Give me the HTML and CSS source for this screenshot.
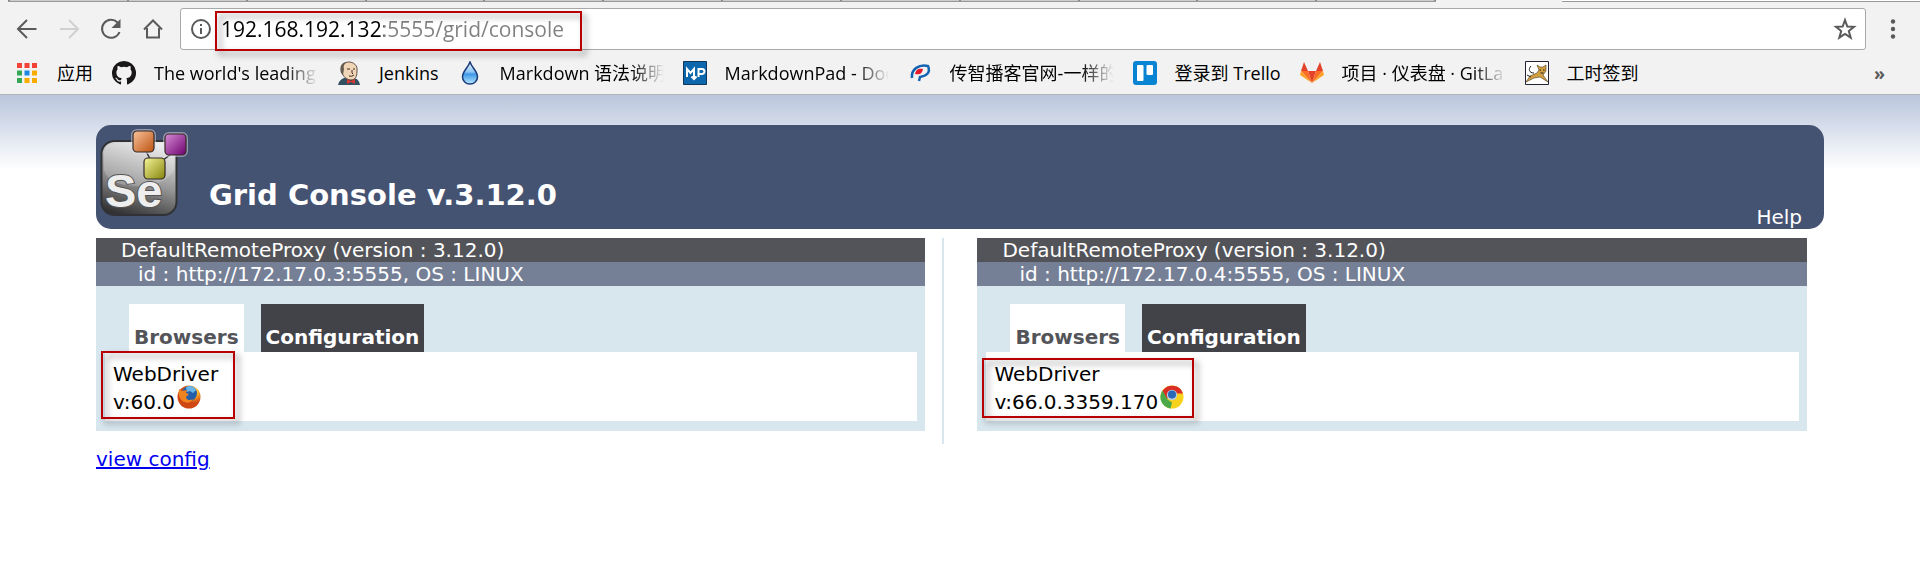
FILE: index.html
```html
<!DOCTYPE html>
<html lang="en">
<head>
<meta charset="utf-8">
<title>Grid Console</title>
<link rel="stylesheet" href="styles.css">
</head>
<body>
<div class="browser">
  <div class="tabstrip"><span class="strip strip-tabs"><i></i><i></i><i></i><i></i><i></i><i></i><i></i><i></i><i></i><i></i><i></i><i></i><i></i></span><span class="strip strip-end"></span></div>
  <div class="toolbar">
    <button class="nav" aria-label="Back"><svg viewBox="0 0 24 24"><path d="M12 3L3 12l9 9M3 12h18.500"/></svg></button>
    <button class="nav nav-off" aria-label="Forward"><svg viewBox="0 0 24 24"><path d="M12 3l9 9-9 9M21 12H3"/></svg></button>
    <button class="nav" aria-label="Reload"><svg viewBox="0 0 24 24"><path d="M20.500 15A9 9 0 1 1 18.500 5.500"/><path class="solid" d="M21.500 2v9h-9z"/></svg></button>
    <button class="nav" aria-label="Home"><svg viewBox="0 0 24 24"><path d="M3 12.500L12 3.500l9 9M6 11v9.500h12V11"/></svg></button>
    <div class="omnibox">
      <svg class="info" viewBox="0 0 24 24"><circle cx="12" cy="12" r="9"/><path d="M12 11v6M12 7v2"/></svg>
      <div class="address">
        <input class="url" type="text" aria-label="Address" value="192.168.192.132:5555/grid/console">
        <span class="mark mark-url"></span>
      </div>
      <button class="star" aria-label="Bookmark this page"><svg viewBox="0 0 24 24"><path d="M12 3l2.300 6.500 6.700.3-5.200 4.200 1.900 6.700L12 17l-5.700 3.700L8.200 14 3 9.800l6.700-.3z"/></svg></button>
    </div>
    <button class="menu" aria-label="Menu"><svg viewBox="0 0 8 24"><circle cx="4" cy="4.500" r="2.200"/><circle cx="4" cy="12" r="2.200"/><circle cx="4" cy="19.500" r="2.200"/></svg></button>
  </div>
  <nav class="bookmarks">
    <a href="#"><svg viewBox="0 0 24 24"><path fill="#f44336" d="M2 2h5v5H2zM9.500 2h5v5h-5zM17 2h5v5h-5z"/><path fill="#34a853" d="M2 9.500h5v5H2zM2 17h5v5H2z"/><path fill="#1e88e5" d="M9.500 9.500h5v5h-5z"/><path fill="#f9ab00" d="M17 9.500h5v5h-5zM9.500 17h5v5h-5zM17 17h5v5h-5z"/></svg><span>应用</span></a>
    <a href="#"><svg viewBox="0 0 16 16"><path fill="#191717" d="M8 0a8 8 0 0 0-2.530 15.590c.4.070.550-.170.550-.380v-1.490c-2.230.480-2.700-.950-2.700-.950-.360-.930-.890-1.170-.890-1.170-.730-.500.050-.490.050-.490.810.060 1.230.830 1.230.830.720 1.230 1.880.870 2.340.670.070-.520.280-.880.510-1.080-1.780-.2-3.640-.890-3.640-3.950 0-.870.310-1.590.820-2.150-.080-.2-.360-1.020.080-2.120 0 0 .670-.210 2.200.820a7.600 7.600 0 0 1 4 0c1.530-1.040 2.200-.820 2.200-.820.440 1.100.160 1.920.080 2.120.510.560.820 1.270.820 2.150 0 3.070-1.870 3.750-3.650 3.950.290.250.540.730.540 1.480v2.200c0 .210.150.460.550.380A8 8 0 0 0 8 0z"/></svg><span class="fade">The world's leading</span></a>
    <a href="#"><svg viewBox="0 0 24 24"><path fill="#335061" d="M1 24c1-4 3-6 6-7l10 0c4 1 5 3 6 7z"/><path fill="#f0d6b7" stroke="#3c2b22" stroke-width=".8" d="M5 11C3 4 8 1 12 1s9 3 8 9c0 6-2 9-6 9s-8-3-9-8z"/><path fill="#655b50" d="M4 12C2 5 5 1 10 1c-3 2-4 4-3 7l-1 6z"/><path stroke="#3c2b22" fill="none" d="M10 8h3M16 8h2M15 9v3l1 1M12 15q3 1 5-1"/><path fill="#d33833" d="M10 18l4 2 4-2v5l-4-2-4 2z"/></svg><span>Jenkins</span></a>
    <a href="#"><svg viewBox="0 0 24 24"><defs><linearGradient id="drop" y2="1" x2="0"><stop stop-color="#e8f4fe"/><stop offset=".45" stop-color="#8fc6f5"/><stop offset=".55" stop-color="#3e96e8"/><stop offset="1" stop-color="#b8e8ff"/></linearGradient></defs><path fill="url(#drop)" stroke="#1b3b78" stroke-width="1.500" d="M12 1c2 6 7.500 9 7.500 15a7.500 7 0 0 1-15 0c0-6 5.500-9 7.500-15z"/></svg><span class="fade">Markdown 语法说明</span></a>
    <a href="#"><svg viewBox="0 0 24 24"><path fill="#0c67ad" stroke="#12375c" d="M.5.5h23v23H.5z"/><path fill="none" stroke="#fff" stroke-width="2" d="M4 16V8l3.500 4L11 8v10M8.500 15.500l2.500 2.500 2.500-2.500M15.500 16V8H19a2 2 0 0 1 0 5h-3.500"/></svg><span class="fade">MarkdownPad - Doc</span></a>
    <a href="#"><svg viewBox="0 0 24 24"><path fill="none" stroke="#1464b4" stroke-width="2.500" d="M4 17C3 8 11 3 20 5c3 7-2 10-8 11l-1 4"/><path fill="#e61a2b" d="M7 13c1-5 4-6 8-5-1 5-4 6-8 5z"/></svg><span class="fade">传智播客官网-一样的</span></a>
    <a href="#"><svg viewBox="0 0 24 24"><rect width="24" height="24" rx="3" fill="#0984d2"/><rect x="4" y="4" width="6.500" height="16" rx="1" fill="#fff"/><rect x="13.500" y="4" width="6.500" height="10" rx="1" fill="#fff"/></svg><span>登录到 Trello</span></a>
    <a href="#"><svg viewBox="0 0 24 24"><path fill="#e24329" d="M12 22L8 10h8zM1 10L4 1l4 9zM23 10l-3-9-4 9z"/><path fill="#fc6d26" d="M12 22L1 10h7zM12 22l11-12h-7z"/><path fill="#fca326" d="M12 22L0 14l1-4zM12 22l12-8-1-4z"/></svg><span class="fade">项目 · 仪表盘 · GitLa</span></a>
    <a href="#"><svg viewBox="0 0 24 24"><path fill="#fff" stroke="#223" d="M.5.5h23v23H.5z"/><path fill="#d2a041" stroke="#4b3820" stroke-width=".6" d="M12 4l3 2h3l3-2v6l-3 4 5 7-8-5-6 1-8 4 4-6 7-3 2-3z"/><path fill="none" stroke="#222" d="M14.500 9h1.500M18 9h1.500M15.500 12h3M9 12C4 12 3 8 6 5M2 14l4 2"/></svg><span>工时签到</span></a>
    <button class="more" aria-label="More bookmarks">»</button>
  </nav>
</div>
<main class="page">
  <header class="header">
    <svg class="logo" viewBox="0 0 96 96">
      <defs>
        <linearGradient id="body" x1=".6" y1="0" x2=".3" y2="1"><stop stop-color="#e8e8e8"/><stop offset=".5" stop-color="#999"/><stop offset="1" stop-color="#333"/></linearGradient>
        <linearGradient id="or" x2="1" y2="1"><stop stop-color="#f8c39c"/><stop offset="1" stop-color="#bd5210"/></linearGradient>
        <linearGradient id="pu" x2="1" y2="1"><stop stop-color="#d78bd6"/><stop offset="1" stop-color="#6d006e"/></linearGradient>
        <linearGradient id="ye" x2="1" y2="1"><stop stop-color="#f5f597"/><stop offset="1" stop-color="#84840c"/></linearGradient>
      </defs>
      <rect x="5.500" y="16" width="75" height="74" rx="13" fill="url(#body)" stroke="#303236" stroke-width="2"/>
      <path d="M8 45V29q0-11 11-11h48q11 0 11 11v16Q68 62 40 61T8 45z" fill="#fff" opacity=".2"/>
      <text x="9" y="82" class="logo-text">Se</text>
      <path d="M50 26l5 10M75 29l-9 7" stroke="#333" stroke-width="1.500"/>
      <g stroke="#e4ddeb" stroke-opacity=".5" stroke-width="4" fill="none"><rect x="37" y="6" width="21" height="21" rx="4"/><rect x="69" y="9" width="21" height="21" rx="4"/></g>
      <g stroke="#352b25" stroke-width="1.200"><rect x="37" y="6" width="21" height="21" rx="4" fill="url(#or)"/><rect x="69" y="9" width="21" height="21" rx="4" fill="url(#pu)"/><rect x="48" y="33" width="21" height="21" rx="4" fill="url(#ye)"/></g>
    </svg>
    <h1>Grid Console v.3.12.0</h1>
    <a class="help" href="#">Help</a>
  </header>
  <div class="columns">
    <div class="col col-left">
      <section class="proxy">
        <p class="proxy-name">DefaultRemoteProxy (version : 3.12.0)</p>
        <p class="proxy-id">id : http://172.17.0.3:5555, OS : LINUX</p>
        <div class="tabs"><button class="tab tab-on">Browsers</button><button class="tab">Configuration</button></div>
        <div class="detail">
          <p>WebDriver</p>
          <p class="version">v:60.0<svg viewBox="0 0 24 24"><defs><radialGradient id="ff" cx=".7" cy=".25"><stop stop-color="#ffe45b"/><stop offset=".55" stop-color="#f49a20"/><stop offset="1" stop-color="#cf4814"/></radialGradient></defs><circle cx="12" cy="12" r="11.500" fill="url(#ff)"/><circle cx="12.500" cy="8.500" r="7.500" fill="#245ea8"/><path fill="#69b5e8" d="M9 2c4-2 8-1 10 3l-3 3-3-2-3 1z"/><path fill="#ef8320" d="M2 4l3 2 5-1-1 3 3 1-3 3c0 3 4 4 7 2-2 5-10 5-13-1-2-4-1-7-1-9z"/></svg></p>
          <span class="mark mark-firefox"></span>
        </div>
      </section>
    </div>
    <div class="col col-right">
      <section class="proxy">
        <p class="proxy-name">DefaultRemoteProxy (version : 3.12.0)</p>
        <p class="proxy-id">id : http://172.17.0.4:5555, OS : LINUX</p>
        <div class="tabs"><button class="tab tab-on">Browsers</button><button class="tab">Configuration</button></div>
        <div class="detail">
          <p>WebDriver</p>
          <p class="version">v:66.0.3359.170<svg viewBox="0 0 24 24"><circle cx="12" cy="12" r="11.500" fill="#f6d21c"/><path fill="#da2d25" d="M2.500 6A11.500 11.500 0 0 1 23 8.500H12L7 14z"/><path fill="#4ba848" d="M2.500 5.500l5 9 4.500 3-1.500 6A11.500 11.500 0 0 1 2.500 5.500z"/><circle cx="12" cy="10" r="5.200" fill="#b9cfe0"/><circle cx="12" cy="9.500" r="4" fill="#2a67b4"/></svg></p>
          <span class="mark mark-chrome"></span>
        </div>
      </section>
    </div>
  </div>
  <a class="config" href="#">view config</a>
</main>
</body>
</html>
```
FILE: styles.css
```css
* { box-sizing: border-box; }
body { margin: 0; background: #fff; color: #000; font-family: "DejaVu Sans", sans-serif; font-size: 20px; }
p, h1 { margin: 0; }
button { border: 0; background: none; padding: 0; font: inherit; color: inherit; }
a { color: inherit; text-decoration: none; }
svg { display: block; flex: none; }

.browser { background: #f2f2f2; border-bottom: 1px solid #b3b3b3; font-family: "Open Sans", "Noto Sans CJK SC", sans-serif; }
.tabstrip { display: flex; justify-content: space-between; height: 2px; padding-left: 8px; }
.strip { background: #ccc; border-bottom: 1px solid #999; }
.strip-tabs { width: 74.7%; display: flex; justify-content: space-between; }
.strip-tabs i { width: 2px; background: #888; }
.strip-end { width: 18.7%; background: #fff; }

.toolbar { display: flex; align-items: center; padding: 6px 23px 0 15px; }
.nav { width: 24px; margin-right: 18px; }
.nav svg, .star svg, .info { width: 24px; height: 24px; fill: none; stroke: #5a5a5a; stroke-width: 2; }
.nav .solid { fill: #5a5a5a; stroke: none; }
.nav-off svg { stroke: #d0d0d0; }
.omnibox { flex: 1; display: flex; align-items: center; height: 42px; margin-left: -3px; padding: 0 8px; background: #fff; border: 1px solid #a9a9a9; border-radius: 3px; }
.address { position: relative; flex: 1; margin-left: 8px; }
.url { display: block; width: 100%; height: 40px; border: 0; padding: 0; outline: 0; font: 21px "Open Sans", sans-serif; color: transparent; background: linear-gradient(90deg, #000 163px, #808080 163px); -webkit-background-clip: text; background-clip: text; }
.menu { width: 8px; margin-left: 23px; }
.menu svg { width: 8px; height: 24px; fill: #5a5a5a; }

.bookmarks { display: flex; align-items: center; gap: 19px; height: 44px; padding: 2px 35px 0 15px; font-size: 18px; line-height: 28px; }
.bookmarks a { display: flex; align-items: center; gap: 18px; white-space: nowrap; }
.bookmarks svg { width: 24px; height: 24px; }
.fade { width: 164px; -webkit-mask-image: linear-gradient(90deg, #000 80%, transparent); mask-image: linear-gradient(90deg, #000 80%, transparent); }
.more { margin-left: auto; font-weight: 700; color: #5a5a5a; }

.mark { position: absolute; border: 2px solid #b90000; filter: drop-shadow(4px 4px 3px rgba(0, 0, 0, .45)); pointer-events: none; }
.mark-url { left: -6px; top: 2px; width: 367px; height: 40px; }
.mark-firefox { left: -4px; top: -1px; width: 134px; height: 68px; }
.mark-chrome { left: -4px; top: 6px; width: 212px; height: 60px; }

.page { padding: 30px 5%; background: linear-gradient(#bac6dd, #fff 75px) no-repeat; }
.header { display: flex; height: 104px; background: #455373; border-radius: 15px; color: #fff; }
.logo { width: 96px; height: 96px; }
.logo-text { font: bold 47px "Liberation Sans", sans-serif; fill: #eee; stroke: #555; stroke-width: 2; paint-order: stroke; }
.header h1 { margin: 52px 0 0 17px; font-size: 29px; line-height: 36px; }
.help { margin: auto 22px 0 auto; line-height: 24px; }

.columns { display: flex; margin-top: 9px; }
.col { padding-bottom: 13px; }
.col-left { flex: 0 0 49.1%; padding-right: 17px; border-right: 2px solid #d8e6ee; }
.col-right { flex: 1; padding-left: 33px; padding-right: 17px; }
.proxy { background: #d8e6ee; padding-bottom: 10px; }
.proxy-name, .proxy-id { line-height: 24px; color: #fff; white-space: nowrap; }
.proxy-name { padding-left: 25px; background: #535459; }
.proxy-id { padding-left: 42px; background: #757f96; }
.tabs { display: flex; gap: 17px; padding: 18px 33px 0; }
.tab { height: 48px; padding: 18px 5px 0; background: #424348; color: #fff; font-weight: 700; }
.tab-on { background: #fff; color: #535459; }
.detail { position: relative; margin: 0 8px 0 9px; padding: 8px 8px 5px; background: #fff; line-height: 28px; }
.version { display: flex; gap: 2px; }
.version svg { width: 24px; height: 24px; margin-top: -3px; }
.config { display: inline-block; margin-top: 3px; line-height: 24px; color: #00e; text-decoration: underline; }
```
